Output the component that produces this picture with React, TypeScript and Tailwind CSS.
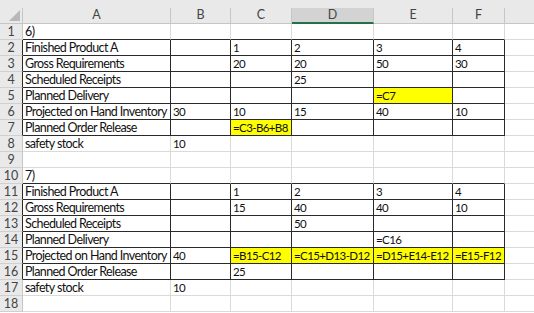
import React from "react";

type Cell = { v?: string; hl?: boolean };

const widths = ["w-[148px]", "w-[60px]", "w-[61px]", "w-[82px]", "w-[79px]", "w-[52px]"];
const letters = ["A", "B", "C", "D", "E", "F"];

// rows 1..18, cells A..F
const sheet: Cell[][] = [
  [{ v: "6)" }],
  [{ v: "Finished Product A" }, {}, { v: "1" }, { v: "2" }, { v: "3" }, { v: "4" }],
  [{ v: "Gross Requirements" }, {}, { v: "20" }, { v: "20" }, { v: "50" }, { v: "30" }],
  [{ v: "Scheduled Receipts" }, {}, {}, { v: "25" }],
  [{ v: "Planned Delivery" }, {}, {}, {}, { v: "=C7", hl: true }],
  [{ v: "Projected on Hand Inventory" }, { v: "30" }, { v: "10" }, { v: "15" }, { v: "40" }, { v: "10" }],
  [{ v: "Planned Order Release" }, {}, { v: "=C3-B6+B8", hl: true }],
  [{ v: "safety stock" }, { v: "10" }],
  [],
  [{ v: "7)" }],
  [{ v: "Finished Product A" }, {}, { v: "1" }, { v: "2" }, { v: "3" }, { v: "4" }],
  [{ v: "Gross Requirements" }, {}, { v: "15" }, { v: "40" }, { v: "40" }, { v: "10" }],
  [{ v: "Scheduled Receipts" }, {}, {}, { v: "50" }],
  [{ v: "Planned Delivery" }, {}, {}, {}, { v: "=C16" }],
  [
    { v: "Projected on Hand Inventory" },
    { v: "40" },
    { v: "=B15-C12", hl: true },
    { v: "=C15+D13-D12", hl: true },
    { v: "=D15+E14-E12", hl: true },
    { v: "=E15-F12", hl: true },
  ],
  [{ v: "Planned Order Release" }, {}, { v: "25" }],
  [{ v: "safety stock" }, { v: "10" }],
  [],
];

const boxed = (r: number) => (r >= 2 && r <= 7) || (r >= 11 && r <= 16);
const topOfBox = (r: number) => r === 1 || r === 10;

const App = () => {
  return (
    <div className="w-[534px] h-[313px] overflow-hidden bg-white font-['Lato',sans-serif] text-[12.5px] text-[#111]">
      {/* column headers */}
      <div className="h-[24px] bg-[#e9e9e9] flex flex-col">
        <div className="h-[8px]" />
        <div className="flex h-4">
          <div className="w-[23px] h-4 border-r border-b border-[#c6c6c6] relative">
            <svg className="absolute left-0 top-0" width="22" height="15" viewBox="0 0 22 15">
              <polygon points="20,2 20,13 9,13" fill="#b8b8b8" />
            </svg>
          </div>
          {letters.map((l, i) => (
            <div
              key={l}
              className={
                l === "D"
                  ? `${widths[i]} h-4 bg-[#d3d3d3] border-r border-r-[#c6c6c6] border-b-2 border-b-[#217346] flex items-center justify-center text-[#444]`
                  : `${widths[i]} h-4 border-r border-b border-[#c6c6c6] flex items-center justify-center text-[#444]`
              }
            >
              {l}
            </div>
          ))}
          <div className="flex-1 h-4 border-b border-[#c6c6c6]" />
        </div>
      </div>

      {sheet.map((row, ri) => {
        const r = ri + 1;
        const box = boxed(r);
        const top = topOfBox(r);
        return (
          <div key={r} className="flex h-4">
            <div
              className={
                box
                  ? "w-[23px] h-4 bg-[#e9e9e9] border-b border-b-[#d0d0d0] border-r border-r-[#2a2a2a] flex items-end justify-center leading-[15px] text-[#444]"
                  : "w-[23px] h-4 bg-[#e9e9e9] border-b border-b-[#d0d0d0] border-r border-r-[#c6c6c6] flex items-end justify-center leading-[15px] text-[#444]"
              }
            >
              {r}
            </div>
            {widths.map((w, ci) => {
              const c = row[ci] ?? {};
              const rb = box ? "border-r-[#2a2a2a]" : "border-r-[#dadada]";
              const bb = box || top ? "border-b-[#2a2a2a]" : "border-b-[#dadada]";
              const size = ci === 0 ? "text-[12.5px]" : "text-[11.5px]";
              return (
                <div
                  key={ci}
                  className={`${w} h-4 border-r border-b ${rb} ${bb} ${
                    c.hl ? "bg-[#ffff00]" : ""
                  } ${size} flex items-end pl-[2px] leading-[15px] tracking-[-0.6px] whitespace-nowrap`}
                >
                  {c.v}
                </div>
              );
            })}
            <div className="flex-1 h-4 border-b border-b-[#dadada]" />
          </div>
        );
      })}
    </div>
  );
};

export default App;
